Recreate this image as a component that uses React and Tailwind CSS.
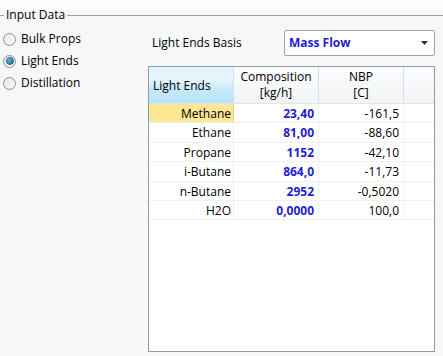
import React from "react";

const rows = [
  { name: "Methane", comp: "23,40", nbp: "-161,5", sel: true },
  { name: "Ethane", comp: "81,00", nbp: "-88,60" },
  { name: "Propane", comp: "1152", nbp: "-42,10" },
  { name: "i-Butane", comp: "864,0", nbp: "-11,73" },
  { name: "n-Butane", comp: "2952", nbp: "-0,5020" },
  { name: "H2O", comp: "0,0000", nbp: "100,0" },
];

const Radio = ({ label, checked }) => (
  <div className="flex items-center gap-[5px] h-[22px]">
    <span className="w-[13px] h-[13px] rounded-full border border-[#8e8f8f] bg-gradient-to-br from-[#e8e8e8] to-[#f8f8f8] flex items-center justify-center">
      {checked && <span className="w-[8px] h-[8px] rounded-full bg-gradient-to-br from-[#6ad0ea] to-[#1a6e96] border border-[#1c5a7c]" />}
    </span>
    <span>{label}</span>
  </div>
);

export default function App() {
  return (
    <div className="w-[443px] h-[356px] bg-[#f7f7f7] text-[12px] text-black overflow-hidden relative" style={{ fontFamily: "'Open Sans', 'Noto Sans', sans-serif" }}>
      <div className="h-[10px] bg-[#fbfcfd]" />
      {/* group box header line */}
      <div className="absolute left-0 right-0 top-[9px] flex items-center">
        <div className="w-[4px] h-px bg-[#a0a0a0]" />
        <span className="px-[2px] -mt-[1px] leading-[14px]">Input Data</span>
        <div className="flex-1 h-px bg-[#a0a0a0]" />
      </div>

      <div className="flex pt-[18px]">
        <div className="w-[148px] pl-[3px] flex flex-col">
          <Radio label="Bulk Props" />
          <Radio label="Light Ends" checked />
          <Radio label="Distillation" />
        </div>

        <div className="w-[287px] flex flex-col">
          <div className="flex items-center h-[26px] mt-[2px]">
            <span className="pl-[4px] w-[136px]">Light Ends Basis</span>
            <div className="flex-1 h-[26px] border border-[#a4a4a4] bg-white rounded-[2px] flex items-center pl-[4px] pr-[6px]">
              <span className="font-bold text-[#1e1ed0] flex-1">Mass Flow</span>
              <svg width="7" height="4" viewBox="0 0 7 4"><path d="M0 0h7L3.5 4z" fill="#333" /></svg>
            </div>
          </div>

          <div className="mt-[10px] h-[286px] border border-[#8a9cb3] bg-white flex flex-col">
            <div className="flex h-[37px] border-b border-[#dde4ec] bg-gradient-to-b from-[#fcfcfd] to-[#f1f3f5]">
              <div className="w-[85px] bg-gradient-to-b from-[#e3f4fc] from-40% via-[#c6e9f8] via-60% to-[#b8e3f6] flex items-end pl-[4px] pb-[8px] border-r border-[#d5dde6]">Light Ends</div>
              <div className="w-[85px] flex flex-col items-center justify-center leading-[16px] border-r border-[#d5dde6]">
                <span>Composition</span><span>[kg/h]</span>
              </div>
              <div className="w-[85px] flex flex-col items-center justify-center leading-[16px] border-r border-[#d5dde6]">
                <span>NBP</span><span>[C]</span>
              </div>
              <div className="flex-1" />
            </div>
            {rows.map((r) => (
              <div key={r.name} className="flex h-[19.4px] border-b border-[#eef1f4] leading-[19px]">
                <div className={`w-[85px] text-right pr-[2px] border-r ${r.sel ? "bg-[#fce795] border-[#e9d47f]" : "border-[#eef1f4]"}`}>{r.name}</div>
                <div className="w-[85px] text-right pr-[4px] font-bold text-[#1e1ed0] border-r border-[#eef1f4]">{r.comp}</div>
                <div className="w-[85px] text-right pr-[4px] border-r border-[#eef1f4]">{r.nbp}</div>
                <div className="flex-1" />
              </div>
            ))}
          </div>
        </div>
      </div>
    </div>
  );
}
